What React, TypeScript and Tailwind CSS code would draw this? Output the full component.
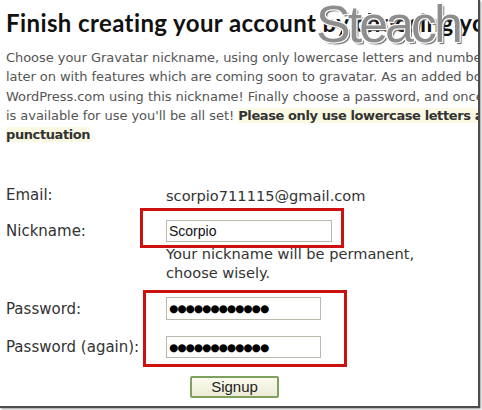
import React from "react";

const sans = { fontFamily: '"DejaVu Sans", Verdana, sans-serif' };

export default function App() {
  return (
    <div className="w-[482px] h-[410px] bg-white overflow-hidden relative">
      <div className="w-[480px] h-[408px] border-r-2 border-b-2 border-[#4d4d4d] shadow-[1px_1px_2px_#9a9a9a] bg-white overflow-hidden relative">
        {/* Heading */}
        <div
          className="pt-[8px] pl-[6px] whitespace-nowrap text-[24px] leading-[30px] font-bold tracking-[0.4px] text-[#111]"
          style={{ fontFamily: '"Lato", "DejaVu Sans", sans-serif' }}
        >
          Finish creating your account by choosing your nickname
        </div>

        {/* Paragraph */}
        <div className="mt-[10px] pl-[6px] text-[13px] leading-[19.3px] text-[#555] whitespace-nowrap tracking-[-0.05px]" style={sans}>
          <div>Choose your Gravatar nickname, using only lowercase letters and numbers. This nickname</div>
          <div>later on with features which are coming soon to gravatar. As an added bonus you will</div>
          <div>WordPress.com using this nickname! Finally choose a password, and once you are done</div>
          <div>
            is available for use you'll be all set!{" "}
            <span className="font-bold text-[#333] bg-[#fafae4] tracking-[-0.4px]">Please only use lowercase letters and numbers, no spaces or</span>
          </div>
          <div>
            <span className="font-bold text-[#333] bg-[#fafae4] tracking-[-0.4px]">punctuation</span>
          </div>
        </div>

        {/* Form */}
        <div className="mt-[41px] pl-[6px] text-[15px] text-[#333]" style={sans}>
          <div className="flex h-[20px] items-center">
            <div className="w-[160px]">Email:</div>
            <div className="text-[14.6px]">scorpio711115@gmail.com</div>
          </div>
          <div className="flex mt-[15px] h-[22px] items-center">
            <div className="w-[160px]">Nickname:</div>
            <div className="w-[166px] h-[22px] border border-[#b9b9ad] flex items-center px-[2px] text-[14px] text-[#111]" style={{ fontFamily: '"Liberation Sans", Arial, sans-serif' }}>
              Scorpio
            </div>
          </div>
          <div className="flex mt-[1.5px]">
            <div className="w-[160px]" />
            <div className="leading-[19px] text-[14.6px] text-[#333]">
              <div>Your nickname will be permanent,</div>
              <div>choose wisely.</div>
            </div>
          </div>
          <div className="flex mt-[15.5px] h-[23px] items-center">
            <div className="w-[160px]">Password:</div>
            <div className="w-[155px] h-[23px] border border-[#b9b9ad] flex items-center px-[2px] text-[10.5px] tracking-[-0.9px] text-black" style={{ fontFamily: '"DejaVu Sans", sans-serif' }}>
              ●●●●●●●●●●●●
            </div>
          </div>
          <div className="flex mt-[16px] h-[22px] items-center">
            <div className="w-[160px]">Password (again):</div>
            <div className="w-[155px] h-[22px] border border-[#b9b9ad] flex items-center px-[2px] text-[10.5px] tracking-[-0.9px] text-black" style={{ fontFamily: '"DejaVu Sans", sans-serif' }}>
              ●●●●●●●●●●●●
            </div>
          </div>
          <div className="flex mt-[18px]">
            <div className="w-[184px]" />
            <button
              className="w-[89px] h-[22px] border-2 border-[#80a060] rounded-[2px] bg-gradient-to-b from-[#fbfbee] to-[#ecebd6] text-[15px] text-[#222] flex items-center justify-center"
              style={{ fontFamily: '"Liberation Sans", Arial, sans-serif' }}
            >
              Signup
            </button>
          </div>
        </div>

        {/* Red annotation boxes */}
        <div className="absolute left-[140px] top-[208px] w-[204px] h-[40px] border-[3px] border-[#cc1111]" />
        <div className="absolute left-[143px] top-[290px] w-[204px] h-[77px] border-[3px] border-[#cc1111]" />

        {/* Watermark */}
        <div
          className="absolute left-[316px] top-[-6px] text-[52px] leading-[60px] tracking-[-3px] text-[#8e8e8e] whitespace-nowrap"
          style={{
            fontFamily: '"Liberation Sans", Arial, sans-serif',
            textShadow:
              "1px 1px 0 #fff, -1px -1px 0 #fff, 1px -1px 0 #fff, -1px 1px 0 #fff, 2px 2px 1px #666",
          }}
        >
          Steach
        </div>
      </div>
    </div>
  );
}
